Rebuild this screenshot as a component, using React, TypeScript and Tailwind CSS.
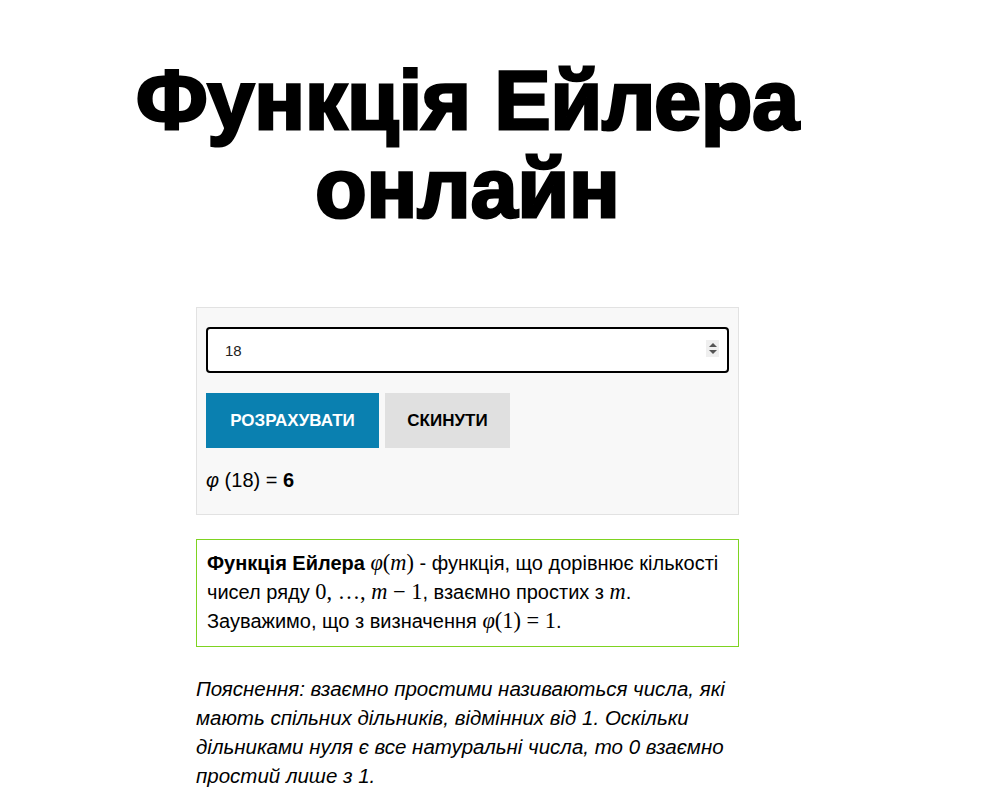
import { useState } from 'react';

function totient(n: number) {
  let result = n;
  let m = n;
  for (let p = 2; p * p <= m; p++) {
    if (m % p === 0) {
      while (m % p === 0) m = Math.floor(m / p);
      result -= result / p;
    }
  }
  if (m > 1) result -= result / m;
  return Math.round(result);
}

const serif = "font-['Liberation_Serif','DejaVu_Serif',serif] text-[1.12em] leading-none";

// math helpers: letters italic, digits and brackets upright
const I = ({ children }: { children: React.ReactNode }) => <span className="italic">{children}</span>;

export default function App() {
  const [value, setValue] = useState('18');
  const [result, setResult] = useState<{ n: number; phi: number } | null>({ n: 18, phi: 6 });

  const calculate = () => {
    const n = parseInt(value);
    if (n > 0) setResult({ n, phi: totient(n) });
  };

  const step = (d: number) => {
    const n = (parseInt(value) || 0) + d;
    setValue(String(n));
  };

  return (
    <div className="min-h-screen bg-white font-['Liberation_Sans',Arial,sans-serif] text-black">
      <div className="w-[935px] pt-[56px] pb-6">
        <h1 className="text-center text-[84px] leading-[88px] font-bold [-webkit-text-stroke:3px_black] mb-[75px]">
          Функція Ейлера
          <br />
          онлайн
        </h1>

        <div className="mx-auto w-[543px]">
          <div className="border border-[#e2e2e2] bg-[#f8f8f8] px-[9px] pt-[19px] pb-[20px]">
            <div className="relative">
              <input
                type="number"
                value={value}
                onChange={(e) => setValue(e.target.value)}
                className="block w-full h-[46px] border-2 border-black rounded-[4px] bg-white pl-[17px] pr-8 text-[15px] text-[#222] outline-none appearance-none [-moz-appearance:textfield] [&::-webkit-inner-spin-button]:appearance-none [&::-webkit-outer-spin-button]:appearance-none"
              />
              <div className="absolute right-[10px] top-[13px] w-[13px] h-[17px] bg-[#efefef] flex flex-col items-center justify-center gap-[3px]">
                <button onClick={() => step(1)} className="w-0 h-0 border-l-[4px] border-r-[4px] border-b-[4px] border-l-transparent border-r-transparent border-b-[#555]" />
                <button onClick={() => step(-1)} className="w-0 h-0 border-l-[4px] border-r-[4px] border-t-[4px] border-l-transparent border-r-transparent border-t-[#555]" />
              </div>
            </div>
            <div className="flex gap-[6px] mt-[20px]">
              <button
                onClick={calculate}
                className="h-[55px] w-[173px] bg-[#0a80b0] text-white text-[17px] font-bold"
              >
                РОЗРАХУВАТИ
              </button>
              <button
                onClick={() => { setValue(''); setResult(null); }}
                className="h-[55px] w-[125px] bg-[#e0e0e0] text-black text-[17px] font-bold"
              >
                СКИНУТИ
              </button>
            </div>
            <div className="mt-[18px] h-[28px] text-[20px] leading-[28px]">
              {result && (
                <>
                  <span className="italic">φ</span> ({result.n}) = <b>{result.phi}</b>
                </>
              )}
            </div>
          </div>

          <div className="mt-[24px] border border-[#7ed321] px-[10px] pt-[9px] pb-[10px] text-[20px] leading-[29px]">
            <b>Функція Ейлера</b>{' '}
            <span className={serif}><I>φ</I>(<I>m</I>)</span> - функція, що дорівнює кількості
            чисел ряду <span className={serif}>0, …, <I>m</I> − 1</span>, взаємно простих з{' '}
            <span className={serif}><I>m</I></span>.
            Зауважимо, що з визначення <span className={serif}><I>φ</I>(1) = 1</span>.
          </div>

          <p className="mt-[27px] italic text-[20.5px] leading-[29px]">
            Пояснення: взаємно простими називаються числа, які мають спільних дільників, відмінних від 1.
            Оскільки дільниками нуля є все натуральні числа, то 0 взаємно простий лише з 1.
          </p>
        </div>
      </div>
    </div>
  );
}
